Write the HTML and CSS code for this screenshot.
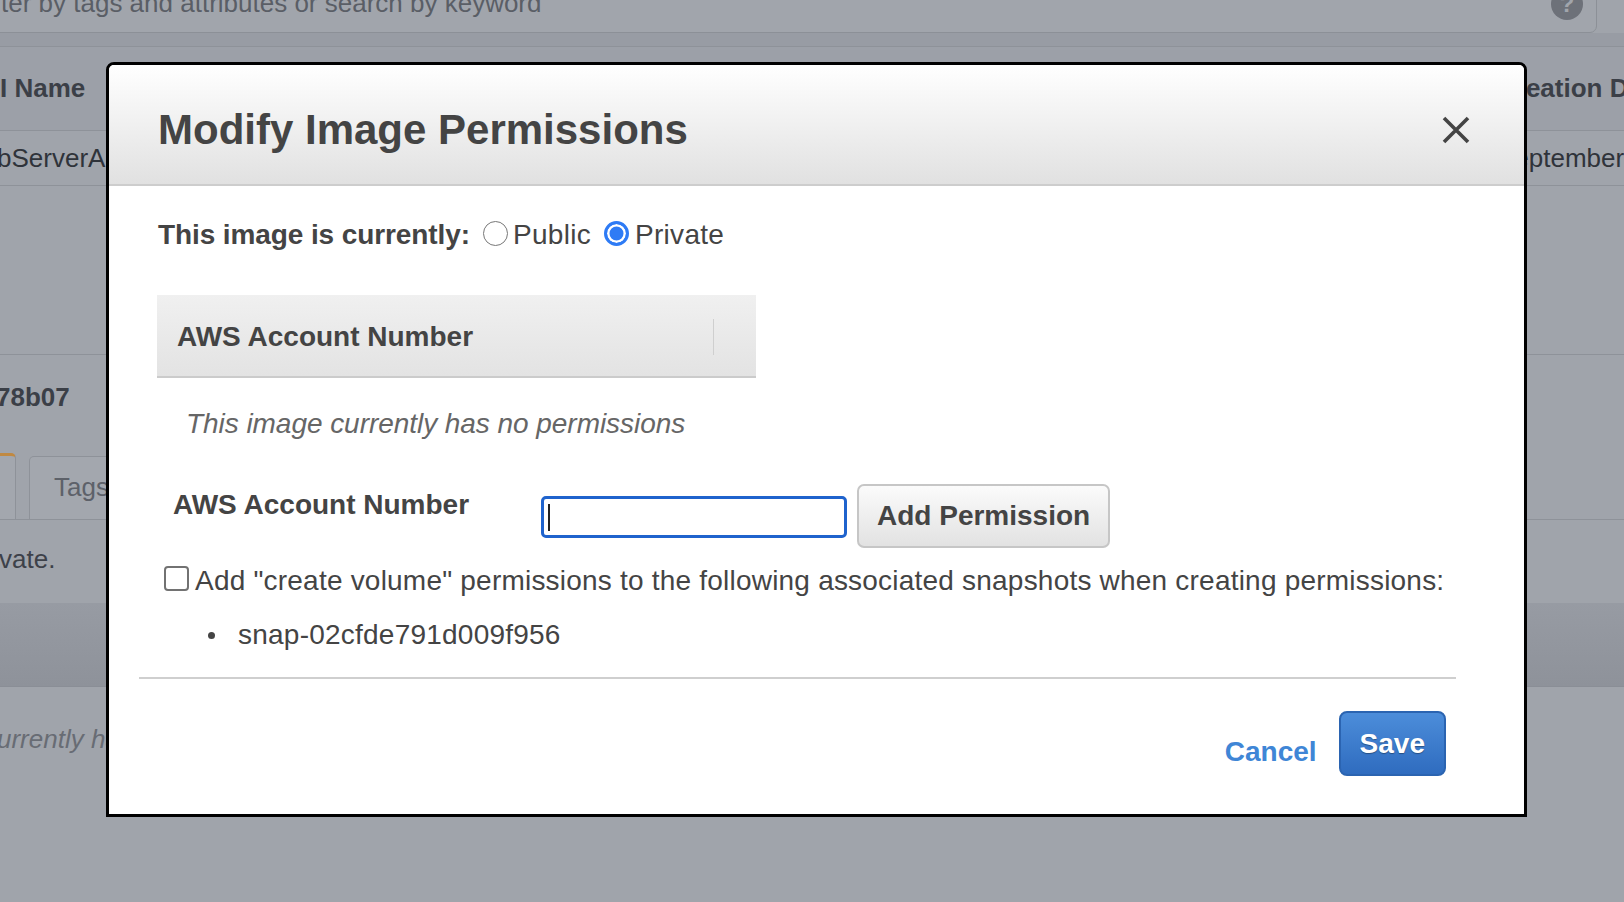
FILE: index.html
```html
<!DOCTYPE html>
<html lang="en">
<head>
<meta charset="utf-8">
<title>Modify Image Permissions</title>
<link rel="stylesheet" href="styles.css">
</head>
<body>
<div class="page">
  <div class="search-row">
    <div class="search-box">
      <span class="search-text">ter by tags and attributes or search by keyword</span>
      <span class="help-icon">?</span>
    </div>
  </div>
  <div class="search-band"></div>
  <div class="grid-head">
    <span class="cell-name">I Name</span>
    <span class="cell-date">Creation Date</span>
  </div>
  <div class="grid-row">
    <span class="cell-name row-name">bServerA</span>
    <span class="cell-date">September 23, 2019</span>
  </div>
  <div class="grid-empty"></div>
  <div class="details">
    <div class="details-id">78b07</div>
    <div class="tabs">
      <span class="tab tab-active"></span>
      <span class="tab tab-tags">Tags</span>
    </div>
    <div class="tab-body">vate.</div>
    <div class="perm-band"></div>
    <div class="perm-empty">urrently ha</div>
  </div>
</div>

<div class="modal" role="dialog" aria-labelledby="modal-title">
  <div class="modal-header">
    <h2 class="modal-title" id="modal-title">Modify Image Permissions</h2>
    <button class="close-btn" aria-label="Close">
      <svg width="28" height="28" viewBox="0 0 28 28"><path d="M2 2 L26 26 M26 2 L2 26" stroke="#444" stroke-width="3.6" fill="none"/></svg>
    </button>
  </div>
  <div class="modal-body">
    <div class="visibility-row">
      <strong class="vis-label">This image is currently:</strong>
      <input class="radio" type="radio" name="vis" id="vis-public">
      <label class="radio-text" for="vis-public">Public</label>
      <input class="radio radio-second" type="radio" name="vis" id="vis-private" checked>
      <label class="radio-text" for="vis-private">Private</label>
    </div>

    <div class="perm-table">
      <div class="perm-th">
        <span class="th-text">AWS Account Number</span>
        <span class="th-divider"></span>
      </div>
    </div>
    <div class="no-perms">This image currently has no permissions</div>

    <div class="add-row">
      <span class="add-label">AWS Account Number</span>
      <div class="acct-input" role="textbox"><span class="caret"></span></div>
      <button class="btn-add">Add Permission</button>
    </div>

    <div class="check-row">
      <input class="checkbox" type="checkbox" id="cv">
      <label class="check-text" for="cv">Add "create volume" permissions to the following associated snapshots when creating permissions:</label>
    </div>
    <ul class="snap-list">
      <li><span class="dot"></span><span>snap-02cfde791d009f956</span></li>
    </ul>

    <div class="separator"></div>

    <div class="modal-footer">
      <a class="cancel-link" href="#">Cancel</a>
      <button class="btn-save">Save</button>
    </div>
  </div>
</div>
</body>
</html>
```
FILE: styles.css
```css
* { box-sizing: border-box; }
html, body { margin: 0; padding: 0; }
body {
  width: 1624px;
  height: 902px;
  overflow: hidden;
  position: relative;
  background: #a0a4ab;
  font-family: "Liberation Sans", Arial, Helvetica, sans-serif;
}

/* ---------- dimmed background page ---------- */
.page { color: #3d4149; font-size: 26px; }

.search-row { height: 33px; display: flow-root; }
.search-box {
  margin-top: -20px;
  margin-left: -10px;
  width: 1607px;
  height: 53px;
  border: 1px solid #8c9097;
  border-radius: 7px;
  background: #a1a5ac;
  display: flex;
  justify-content: space-between;
  align-items: flex-start;
  padding: 7px 13px 0 10px;
}
.search-text { line-height: 30px; color: #5a5e66; }
.help-icon {
  margin-top: 0;
  width: 32px;
  height: 32px;
  border-radius: 50%;
  background: #6d7179;
  color: #a1a5ac;
  font-weight: bold;
  font-size: 24px;
  line-height: 32px;
  text-align: center;
}
.search-band {
  height: 14px;
  background: #989ca4;
  border-bottom: 1px solid #8e9299;
}
.grid-head {
  height: 84px;
  background: #9ca0a8;
  border-bottom: 1px solid #8e9299;
  display: grid;
  grid-template-columns: 1497px auto;
  align-items: center;
  font-weight: bold;
  color: #3b3f47;
}
.cell-name { white-space: nowrap; }
.cell-date { white-space: nowrap; }
.grid-row {
  height: 55px;
  border-bottom: 1px solid #8e9299;
  display: grid;
  grid-template-columns: 1497px auto;
  padding-top: 12px;
  line-height: 30px;
  color: #2f333a;
}
.row-name { margin-left: -3px; }
.grid-empty {
  height: 169px;
  border-bottom: 1px solid #8e9299;
}
.details-id {
  height: 98px;
  padding-top: 27px;
  line-height: 30px;
  font-weight: bold;
  margin-left: -4px;
  color: #3b3f47;
}
.tabs {
  height: 67px;
  display: flex;
  align-items: flex-end;
  border-bottom: 1px solid #8e9299;
}
.tab {
  height: 66px;
  border: 1px solid #8e9299;
  border-bottom: none;
  border-radius: 0 5px 0 0;
  background: #a3a7ae;
}
.tab-active {
  width: 16px;
  border-top: 3px solid #c08942;
  border-left: none;
}
.tab-tags {
  height: 63px;
  width: 200px;
  margin-left: 13px;
  border-radius: 5px 5px 0 0;
  padding: 15px 0 0 24px;
  line-height: 30px;
  color: #5d6169;
}
.tab-body {
  height: 83px;
  padding-top: 24px;
  line-height: 30px;
  margin-left: -1px;
  color: #3d4149;
}
.perm-band {
  height: 84px;
  background: linear-gradient(#979ba3, #8e929a);
  border-bottom: 1px solid #8a8e96;
}
.perm-empty {
  padding-top: 37px;
  line-height: 30px;
  font-style: italic;
  margin-left: -3px;
  color: #686c74;
}

/* ---------- modal ---------- */
.modal {
  position: absolute;
  left: 106px;
  top: 62px;
  width: 1421px;
  height: 755px;
  background: #fff;
  border: 3px solid #000;
  border-radius: 8px 8px 0 0;
  color: #444;
  font-size: 28px;
}
.modal-header {
  height: 121px;
  border-bottom: 2px solid #cdcdcd;
  border-radius: 5px 5px 0 0;
  background: linear-gradient(#ffffff, #f3f3f3 40%, #e1e1e1);
  display: flex;
  justify-content: space-between;
  align-items: flex-start;
  padding: 40px 43px 0 49px;
}
.modal-title {
  margin: 0;
  font-size: 42px;
  line-height: 50px;
  font-weight: bold;
  color: #444;
}
.close-btn {
  width: 50px;
  height: 50px;
  border: none;
  background: transparent;
  padding: 0;
  display: flex;
  align-items: center;
  justify-content: center;
}

.modal-body { padding-left: 49px; padding-top: 1px; }

.visibility-row {
  margin-top: 28px;
  height: 40px;
  line-height: 40px;
  display: flex;
  align-items: center;
}
.vis-label { font-weight: bold; letter-spacing: -0.1px; }
.radio {
  appearance: none;
  -webkit-appearance: none;
  margin: 0 0 0 13px;
  width: 25px;
  height: 25px;
  border-radius: 50%;
  border: 1.5px solid #777;
  background: #fff;
  position: relative;
  top: -2px;
}
.radio:checked {
  border: 3px solid #2e7bf5;
  background: #2e7bf5;
  box-shadow: inset 0 0 0 2.5px #fff;
}
.radio-second { margin-left: 13px; }
.radio-text { margin-left: 5px; letter-spacing: 0.3px; }
.radio-second + .radio-text { margin-left: 6px; }

.perm-table {
  margin-top: 40px;
  margin-left: -1px;
  width: 599px;
}
.perm-th {
  height: 83px;
  border-bottom: 2px solid #cbcbcb;
  background: linear-gradient(#f0f0f0, #e3e3e3);
  display: flex;
  align-items: center;
  padding: 2px 0 0 20px;
  font-weight: bold;
}
.th-divider {
  margin-left: auto;
  margin-right: 42px;
  width: 1px;
  height: 36px;
  background: #cfcfcf;
}
.no-perms {
  margin-top: 26px;
  padding-left: 28px;
  line-height: 40px;
  font-style: italic;
  letter-spacing: -0.05px;
  color: #666;
}

.add-row {
  margin-top: 40px;
  display: flex;
  align-items: flex-start;
}
.add-label {
  width: 383px;
  padding-left: 15px;
  margin-top: 1px;
  line-height: 40px;
  font-weight: bold;
}
.acct-input {
  margin-top: 12px;
  width: 306px;
  height: 42px;
  border: 3px solid #1f63cd;
  border-radius: 5px;
  display: flex;
  align-items: center;
  padding-left: 4px;
}
.caret {
  width: 2px;
  height: 27px;
  background: #222;
}
.btn-add {
  margin-left: 10px;
  height: 64px;
  padding: 0 18px;
  border: 2px solid #c6c6c6;
  border-radius: 7px;
  background: linear-gradient(#fbfbfb, #e2e2e2);
  font-family: inherit;
  font-size: 28px;
  font-weight: bold;
  color: #444;
}

.check-row {
  margin-top: 13px;
  display: flex;
  align-items: flex-start;
  line-height: 40px;
}
.checkbox {
  appearance: none;
  -webkit-appearance: none;
  margin: 5px 0 0 6px;
  width: 25px;
  height: 25px;
  border: 2px solid #727272;
  border-radius: 4px;
  background: #fff;
}
.check-text { margin-left: 6px; letter-spacing: 0.21px; }

.snap-list {
  list-style: none;
  margin: 14px 0 0 0;
  padding: 0 0 0 50px;
  line-height: 40px;
  letter-spacing: 0.23px;
}
.snap-list li { display: flex; align-items: center; }
.dot {
  width: 7px;
  height: 7px;
  border-radius: 50%;
  background: #444;
  margin-right: 23px;
}

.separator {
  margin-top: 22px;
  margin-left: -19px;
  width: 1317px;
  height: 2px;
  background: #cfcfcf;
}

.modal-footer {
  margin-top: 32px;
  display: flex;
  justify-content: flex-end;
  align-items: flex-start;
  padding-right: 78px;
}
.cancel-link {
  margin-top: 21px;
  margin-right: 22px;
  line-height: 40px;
  font-weight: bold;
  color: #3f86d6;
  text-decoration: none;
}
.btn-save {
  height: 65px;
  padding: 0 19px;
  border: 2px solid #2b64b1;
  border-radius: 8px;
  background: linear-gradient(#4c8dda, #2f6cbf);
  font-family: inherit;
  font-size: 28px;
  font-weight: bold;
  color: #fff;
  text-shadow: 0 1px 1px rgba(0, 0, 0, 0.35);
}
```
